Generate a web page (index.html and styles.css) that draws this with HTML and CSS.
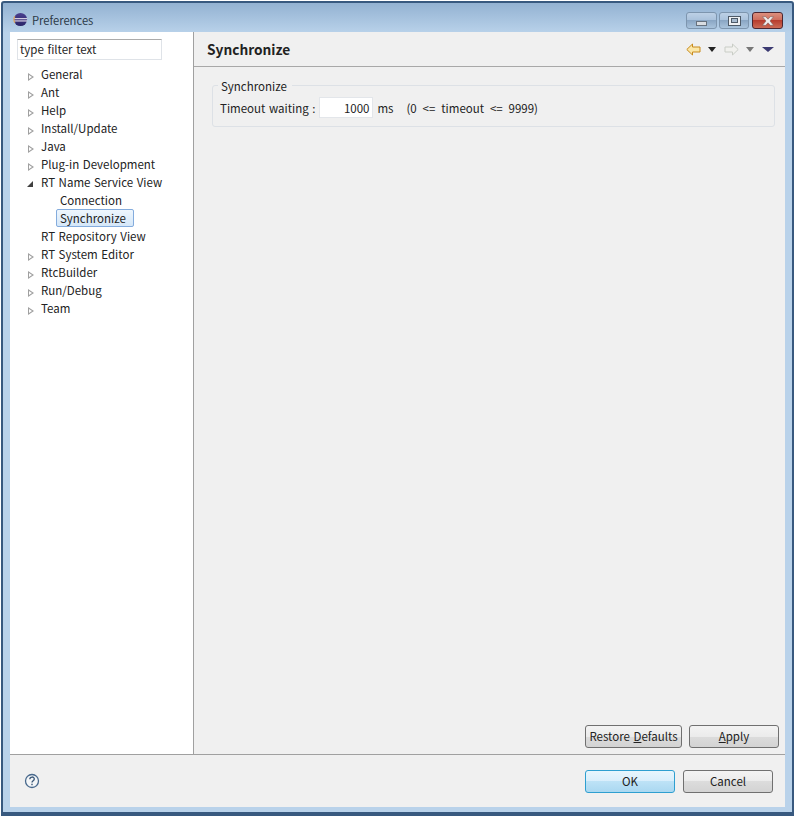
FILE: index.html
```html
<!DOCTYPE html>
<html lang="en">
<head>
<meta charset="utf-8">
<title>Preferences</title>
<link rel="stylesheet" href="styles.css">
</head>
<body>
<div class="window">
  <header class="titlebar">
    <svg class="app-icon" width="15" height="15" viewBox="0 0 16 16">
      <defs><linearGradient id="eg" x1="0" y1="0" x2="0" y2="1"><stop offset="0" stop-color="#4a3f8f"/><stop offset="1" stop-color="#2a2468"/></linearGradient></defs>
      <circle cx="8" cy="8" r="7" fill="url(#eg)"/>
      <rect x="1" y="6.600" width="14" height="1.100" fill="#f3eef7"/>
      <rect x="1" y="9" width="14" height="1.100" fill="#f3eef7"/>
      <path d="M2 4.500 A7 7 0 0 0 2 11.500" stroke="#d9a25c" stroke-width="1.300" fill="none"/>
    </svg>
    <span class="title">Preferences</span>
    <div class="win-controls">
      <div class="win-btn min"><span class="min-glyph"></span></div>
      <div class="win-btn"><span class="max-glyph"></span></div>
      <div class="win-btn close">
        <svg width="14" height="10" viewBox="0 0 14 10"><path d="M1.500 .7h3.200L7 3.200 9.300 .7h3.200L9 5l3.500 4.300H9.300L7 6.800 4.700 9.300H1.500L5 5z" fill="#f2eeee" stroke="#6a5a5a" stroke-width=".5"/></svg>
      </div>
    </div>
  </header>
  <div class="client">
    <div class="main">
      <aside class="sidebar">
        <div class="filter">type filter text</div>
        <ul class="tree">
          <li class="row"><span class="tw closed"></span>General</li>
          <li class="row"><span class="tw closed"></span>Ant</li>
          <li class="row"><span class="tw closed"></span>Help</li>
          <li class="row"><span class="tw closed"></span>Install/Update</li>
          <li class="row"><span class="tw closed"></span>Java</li>
          <li class="row"><span class="tw closed"></span>Plug-in Development</li>
          <li class="row"><span class="tw open"></span>RT Name Service View</li>
          <li class="row child"><span class="label">Connection</span></li>
          <li class="row child"><span class="label selected">Synchronize</span></li>
          <li class="row"><span class="tw"></span>RT Repository View</li>
          <li class="row"><span class="tw closed"></span>RT System Editor</li>
          <li class="row"><span class="tw closed"></span>RtcBuilder</li>
          <li class="row"><span class="tw closed"></span>Run/Debug</li>
          <li class="row"><span class="tw closed"></span>Team</li>
        </ul>
      </aside>
      <section class="page">
        <div class="page-head">
          <h1 class="page-title">Synchronize</h1>
          <div class="nav">
            <svg class="arrow" width="15" height="13" viewBox="0 0 15 13"><path d="M.8 6.500 6.500 1v3h7.500v5H6.500v3z" fill="#fbe7a8" stroke="#c88a1a"/></svg>
            <span class="caret dark"></span>
            <svg class="arrow second" width="15" height="13" viewBox="0 0 15 13"><path d="M14.200 6.500 8.500 1v3H1v5h7.500v3z" fill="#f1f1ee" stroke="#c9cdc6"/></svg>
            <span class="caret grey"></span>
            <span class="caret navy"></span>
          </div>
        </div>
        <div class="page-body">
          <fieldset class="group">
            <legend class="legend">Synchronize</legend>
            <span class="lbl">Timeout waiting :</span>
            <span class="num">1000</span>
            <span class="unit">ms</span>
            <span class="range">(0 &lt;= timeout &lt;= 9999)</span>
          </fieldset>
        </div>
        <div class="page-actions">
          <div class="btn restore">Restore <u>D</u>efaults</div>
          <div class="btn apply"><u>A</u>pply</div>
        </div>
      </section>
    </div>
    <footer class="footer">
      <svg class="help" width="16" height="16" viewBox="0 0 16 16"><circle cx="8" cy="8" r="6.500" fill="#f4f6f8" stroke="#47688c" stroke-width="1.300"/><path d="M5.800 6.300c0-3 4.500-3 4.500-.2 0 1.800-2.300 1.700-2.300 3.500" fill="none" stroke="#3b5878" stroke-width="1.300"/><rect x="7.300" y="10.700" width="1.400" height="1.500" fill="#3b5878"/></svg>
      <div class="footer-btns">
        <div class="btn ok">OK</div>
        <div class="btn cancel">Cancel</div>
      </div>
    </footer>
  </div>
</div>
</body>
</html>
```
FILE: styles.css
```css
* { box-sizing: border-box; }
html, body { margin: 0; padding: 0; background: #fff; }
body { width: 797px; height: 816px; padding: 1px 3px 0 1px; overflow: hidden; font-family: "Noto Sans CJK KR", "Noto Sans", sans-serif; font-size: 11.500px; word-spacing: 1px; color: #222; }
.window { width: 793px; height: 815px; display: flex; flex-direction: column; border: 2px solid #38597f; border-bottom-width: 4px; border-radius: 3px 3px 0 0; background: linear-gradient(#93b2d2 0, #b9d2ea 30px, #b9d2ea 100%); padding: 0 7px 5px 7px; }
.titlebar { height: 29px; flex: none; display: flex; align-items: center; }
.app-icon { margin: 3px 0 0 3px; }
.title { margin: 5px 0 0 4px; color: #2c3a48; font-size: 11.200px; }
.win-controls { margin-left: auto; align-self: flex-start; display: flex; gap: 2px; margin-top: 9px; margin-right: 2px; }
.win-btn { width: 30px; height: 17px; border: 1px solid #7d95ae; border-radius: 3px; background: linear-gradient(#bcd0e6 0, #a9c1db 50%, #8aa6c4 50%, #a9c3dc 100%); display: flex; align-items: center; justify-content: center; }
.win-btn.min { width: 31px; }
.win-btn.close { width: 31px; margin-left: 1px; border-color: #4c2630; background: linear-gradient(#dc8f7e 0, #cd6b5b 50%, #b73d2e 50%, #cc6a55 100%); }
.min-glyph { width: 11px; height: 5px; margin-top: 5px; background: #d9dde2; border: 1px solid #66717e; }
.max-glyph { width: 13px; height: 10px; background: #eef0f3; border: 1px solid #4e5a68; display: flex; align-items: center; justify-content: center; }
.max-glyph::after { content: ""; width: 5px; height: 3px; background: #a8bbd0; border: 1px solid #4e5a68; }
.client { flex: 1; min-height: 0; display: flex; flex-direction: column; background: #f0f0f0; }
.main { flex: 1; min-height: 0; display: flex; border-bottom: 1px solid #a0a0a0; }
.sidebar { width: 184px; flex: none; background: #fff; border-right: 1px solid #a0a0a0; padding: 7px 0 0 7px; }
.filter { width: 145px; height: 21px; border: 1px solid #dfe3e8; border-top-color: #ababab; line-height: 18px; padding-left: 2px; color: #1e1e1e; }
.tree { list-style: none; margin: 5px 0 0; padding: 0; }
.row { height: 18px; line-height: 18px; display: flex; align-items: center; white-space: nowrap; padding-left: 10px; color: #222; }
.tw { width: 14px; height: 18px; flex: none; position: relative; }
.tw.closed::before { content: ""; position: absolute; left: 1px; top: 8px; border-left: 6px solid #a0a0a0; border-top: 4.500px solid transparent; border-bottom: 4.500px solid transparent; }
.tw.closed::after { content: ""; position: absolute; left: 2px; top: 10px; border-left: 3px solid #fff; border-top: 2.500px solid transparent; border-bottom: 2.500px solid transparent; }
.tw.open::before { content: ""; position: absolute; left: 0; top: 8px; border-right: 6px solid #404040; border-top: 6px solid transparent; }
.row.child { padding-left: 40px; }
.label { display: block; height: 18px; line-height: 16px; padding: 0 6px 0 3px; border: 1px solid transparent; margin-left: -1px; }
.label.selected { width: 78px; background: linear-gradient(#eef6fd, #d5e7f8); border-color: #84acdd; border-radius: 2px; }
.page { flex: 1; min-width: 0; display: flex; flex-direction: column; }
.page-head { height: 35px; flex: none; display: flex; align-items: center; border-bottom: 1px solid #a8a8a8; padding: 0 11px 0 13px; }
.page-title { margin: 0; font-size: 13.700px; font-weight: 700; color: #222; }
.nav { margin-left: auto; display: flex; align-items: center; }
.arrow.second { margin-left: 8px; }
.caret { width: 0; height: 0; border-left: 4.500px solid transparent; border-right: 4.500px solid transparent; border-top: 5px solid #222; margin-left: 7px; }
.caret.navy { border-top-color: #3b3a72; border-left-width: 6px; border-right-width: 6px; margin-left: 8px; }
.caret.grey { border-top-color: #777; }
.page-body { flex: 1; min-height: 0; padding: 11px 10px 0 18px; }
.group { margin: 0; height: 49px; padding: 0 0 4px 7px; border: 1px solid #dde1e6; border-radius: 3px; display: flex; align-items: center; }
.legend { padding: 1px 5px 0 3px; margin-left: -2px; line-height: 14px; }
.lbl { margin-right: 4px; }
.num { width: 54px; height: 21px; line-height: 20px; background: #fff; border: 1px solid #e3e6ea; text-align: right; padding-right: 3px; }
.unit { margin-left: 4px; }
.range { margin-left: 13px; word-spacing: 3.300px; }
.page-actions { flex: none; display: flex; justify-content: flex-end; gap: 7px; padding: 0 6px 6px 0; }
.btn { height: 23px; line-height: 21px; text-align: center; border: 1px solid #707070; border-radius: 3px; background: linear-gradient(#f3f3f3 0, #ebebeb 50%, #dcdcdc 50%, #d3d3d3 100%); color: #222; }
.restore { width: 97px; }
.apply { width: 90px; }
.footer { height: 52px; flex: none; display: flex; align-items: center; justify-content: space-between; padding: 0 12px 0 14px; }
.footer-btns { display: flex; gap: 8px; margin-top: 1px; }
.ok { width: 90px; border-color: #2e9fd0; background: linear-gradient(#e8f6fd 0, #d8eefb 50%, #bde2f6 50%, #aad8f1 100%); }
.cancel { width: 90px; }
```
